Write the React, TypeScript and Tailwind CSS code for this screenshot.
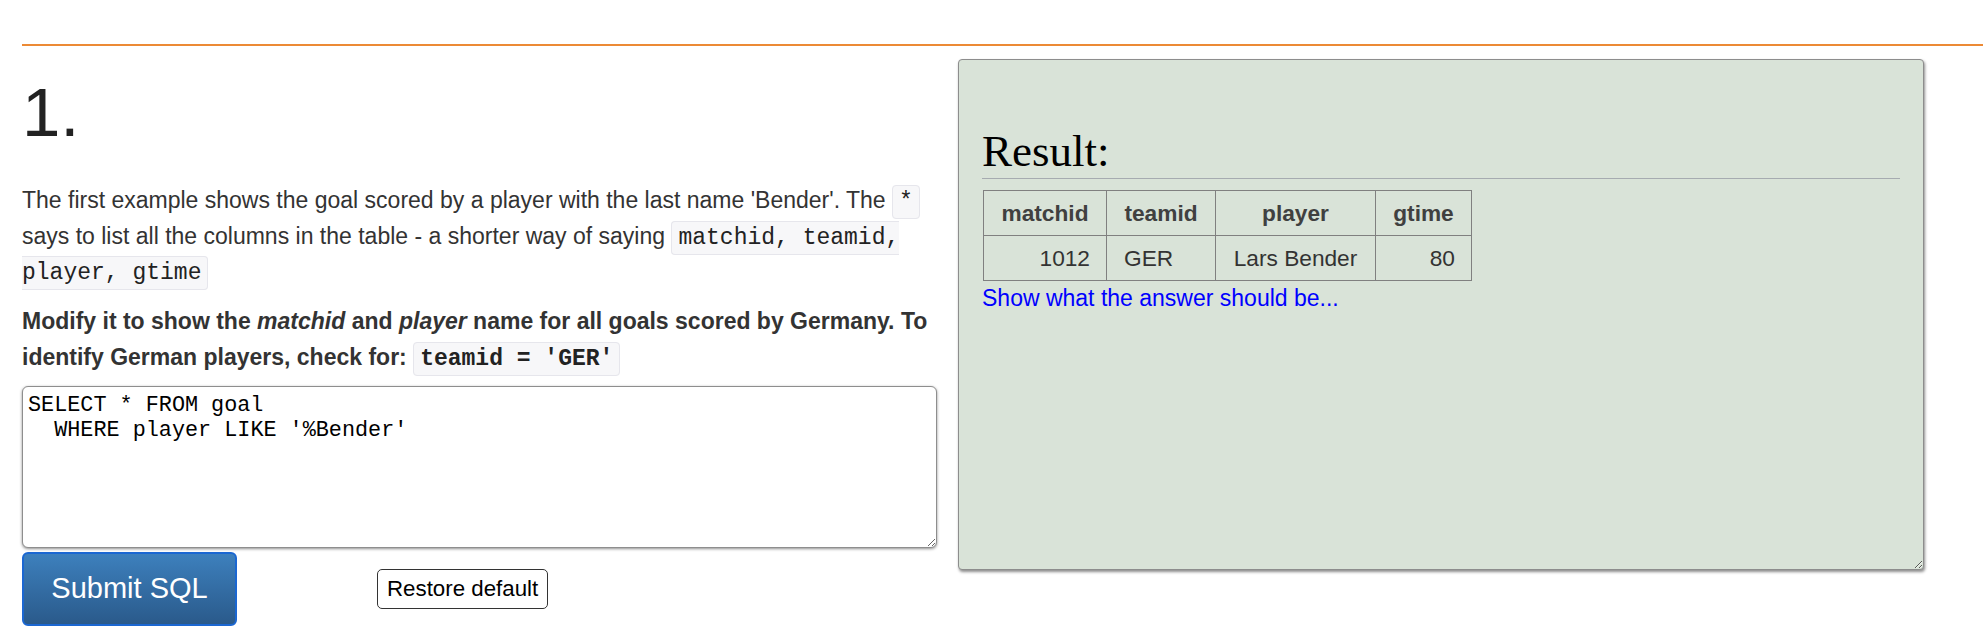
import React from 'react';

const sans = "font-['Liberation_Sans',Arial,Helvetica,sans-serif]";
const mono = "font-['Liberation_Mono','Courier_New',monospace]";

function Code({ children, bold = false }: { children: React.ReactNode; bold?: boolean }) {
    return (
        <code
            className={`${mono} text-[23px] leading-none ${bold ? 'font-bold' : 'font-normal'} text-[#222] bg-[#f7f7f9] border border-[#e6e6ec] rounded-[4px] px-[6px] py-[3px]`}
        >
            {children}
        </code>
    );
}

const ROWS = [{ matchid: 1012, teamid: 'GER', player: 'Lars Bender', gtime: 80 }];

export default function App() {
    return (
        <div className={`min-h-screen bg-white ${sans} text-[#333]`}>
            <div className="ml-[22px] pt-[44px]">
                <div className="border-t-2 border-[#ec8a35]">
                    <div className="flex gap-[21px]">
                        {/* question column */}
                        <div className="w-[915px] shrink-0">
                            <h2 className="mt-[32px] text-[69px] leading-none font-normal text-[#222]">1.</h2>

                            <p className="mt-[36px] text-[23px] leading-[35.5px]">
                                The first example shows the goal scored by a player with the last name 'Bender'. The{' '}
                                <Code>*</Code> says to list all the columns in the table - a shorter way of saying{' '}
                                <Code>matchid, teamid, player, gtime</Code>
                            </p>

                            <p className="mt-[14.5px] text-[23px] leading-[35.5px] font-bold">
                                Modify it to show the <i>matchid</i> and <i>player</i> name for all goals scored by Germany. To
                                identify German players, check for: <Code bold>teamid = 'GER'</Code>
                            </p>

                            <textarea
                                spellCheck={false}
                                defaultValue={"SELECT * FROM goal\n  WHERE player LIKE '%Bender'"}
                                className={`mt-[10.5px] block w-[915px] h-[162px] ${mono} text-[21.8px] leading-[25px] text-black bg-white border border-[#8e8e8e] rounded-[6px] px-[5px] py-[6px] shadow-[0_1px_3px_rgba(0,0,0,0.45)] outline-none resize`}
                            />

                            <div className="mt-[4px] flex items-center">
                                <button className="w-[215px] h-[74px] rounded-[6px] border-2 border-[#1b67d2] bg-gradient-to-b from-[#3d80bd] to-[#2a5a8b] text-white text-[29px]">
                                    Submit SQL
                                </button>
                                <button className="ml-[140px] h-[40px] px-[9px] rounded-[5px] border border-[#333] bg-white text-black text-[22.3px]">
                                    Restore default
                                </button>
                            </div>
                        </div>

                        {/* result panel */}
                        <div className="mt-[13px] w-[966px] h-[511px] shrink-0 resize overflow-auto bg-[#d9e3d8] border border-[#8d8d8d] rounded-[4px] shadow-[1px_2px_3px_rgba(0,0,0,0.45)] pt-[67px] px-[23px]">
                            <h3 className="font-['Liberation_Serif',Georgia,serif] text-[45px] leading-[49.5px] font-normal text-black">
                                Result:
                            </h3>
                            <div className="mt-[1.5px] border-t border-[#a6abb0]" />
                            <table className="mt-[11px] ml-[1px] table-fixed w-[488px] border-collapse text-[22.7px]">
                                <thead>
                                    <tr>
                                        <th className="w-[123px] border border-[#808080] py-[4px] leading-[36px] font-bold text-[#404040] text-center">matchid</th>
                                        <th className="w-[109px] border border-[#808080] py-[4px] leading-[36px] font-bold text-[#404040] text-center">teamid</th>
                                        <th className="w-[160px] border border-[#808080] py-[4px] leading-[36px] font-bold text-[#404040] text-center">player</th>
                                        <th className="w-[96px] border border-[#808080] py-[4px] leading-[36px] font-bold text-[#404040] text-center">gtime</th>
                                    </tr>
                                </thead>
                                <tbody>
                                    {ROWS.map((r) => (
                                        <tr key={r.matchid}>
                                            <td className="border border-[#808080] py-[4px] px-[16px] leading-[36px] text-right">{r.matchid}</td>
                                            <td className="border border-[#808080] py-[4px] px-[17px] leading-[36px] text-left">{r.teamid}</td>
                                            <td className="border border-[#808080] py-[4px] px-[16px] leading-[36px] text-center">{r.player}</td>
                                            <td className="border border-[#808080] py-[4px] px-[16px] leading-[36px] text-right">{r.gtime}</td>
                                        </tr>
                                    ))}
                                </tbody>
                            </table>
                            <a href="#" className="block text-[23px] leading-[35.5px] text-[#0000ff]">
                                Show what the answer should be...
                            </a>
                        </div>
                    </div>
                </div>
            </div>
        </div>
    );
}
